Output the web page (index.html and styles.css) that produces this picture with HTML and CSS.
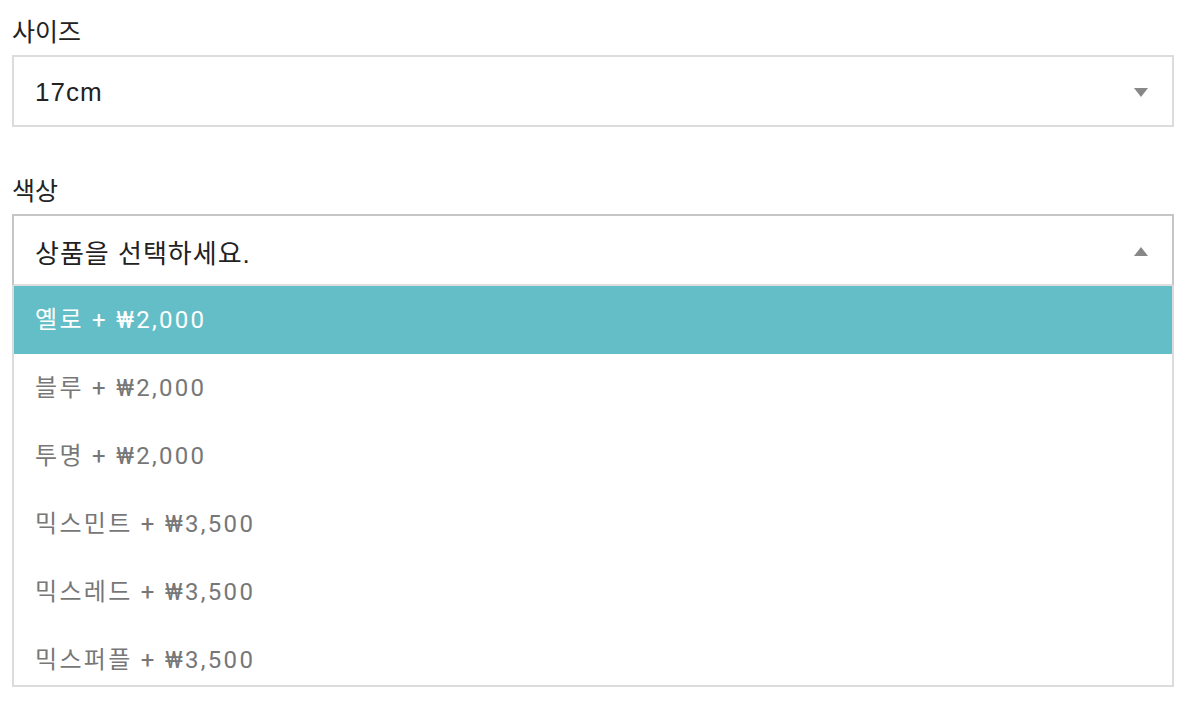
FILE: index.html
```html
<!DOCTYPE html>
<html>
<head>
    <title>Options</title>
    <link rel="stylesheet" href="styles.css">
</head>
<body>

<div class="options">
    <div class="field">
        <div class="label">사이즈</div>
        <div class="select">
            <span class="value">17cm</span>
            <span class="arrow down"></span>
        </div>
    </div>

    <div class="field">
        <div class="label">색상</div>
        <div class="select open">
            <span class="value">상품을 선택하세요.</span>
            <span class="arrow up"></span>
        </div>
        <ul class="list">
            <li class="active">옐로 + ₩2,000</li>
            <li>블루 + ₩2,000</li>
            <li>투명 + ₩2,000</li>
            <li>믹스민트 + ₩3,500</li>
            <li>믹스레드 + ₩3,500</li>
            <li>믹스퍼플 + ₩3,500</li>
        </ul>
    </div>
</div>

</body>
</html>
```
FILE: styles.css
```css
body {
    margin: 0;
    background-color: #fff;
    font-family: Roboto, "Noto Sans CJK KR", sans-serif;
    color: #222;
}

.options {
    padding: 15px 16px 0 12px;
}

.field {
    margin-bottom: 47px;
}

.label {
    font-family: "Liberation Sans", "Noto Sans CJK KR", sans-serif;
    font-size: 25px;
    line-height: 34px;
    margin-bottom: 6px;
}

.select {
    display: flex;
    justify-content: space-between;
    align-items: center;
    height: 66px;
    padding: 2px 24px 0 21px;
    border: 2px solid #dcdcdc;
}

.select .value {
    font-family: "Liberation Sans", "Noto Sans CJK KR", sans-serif;
    font-size: 26px;
    letter-spacing: 1px;
}

.select.open {
    border-color: #c6c6c6;
    border-bottom-color: #dedede;
}

.arrow {
    width: 0;
    height: 0;
    border-left: 7px solid transparent;
    border-right: 7px solid transparent;
}

.arrow.down {
    border-top: 9px solid #888;
}

.arrow.up {
    border-bottom: 9px solid #888;
}

.list {
    list-style: none;
    margin: 0;
    padding: 0;
    height: 399px;
    overflow: hidden;
    border: 2px solid #dcdcdc;
    border-top: none;
}

.list li {
    height: 68px;
    line-height: 68px;
    padding-left: 21px;
    font-size: 24px;
    letter-spacing: 2.3px;
    color: #777;
}

.list li.active {
    background-color: #64bec8;
    color: #fff;
}
```
